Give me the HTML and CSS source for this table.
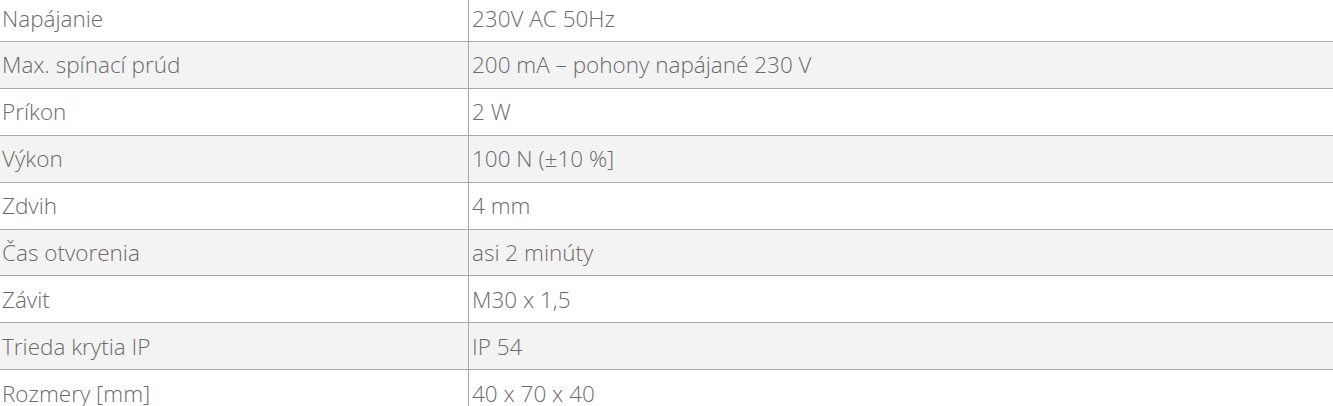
FILE: index.html
```html
<!DOCTYPE html>
<html lang="sk">
<head>
<meta charset="utf-8">
<title>Parametre</title>
<link rel="stylesheet" href="styles.css">
</head>
<body>
<div class="wrap">
<table class="specs">
<tbody>
<tr><td>Napájanie</td><td>230V AC 50Hz</td></tr>
<tr><td>Max. spínací prúd</td><td>200 mA – pohony napájané 230 V</td></tr>
<tr><td>Príkon</td><td>2 W</td></tr>
<tr><td>Výkon</td><td>100 N (±10 %]</td></tr>
<tr><td>Zdvih</td><td>4 mm</td></tr>
<tr><td>Čas otvorenia</td><td>asi 2 minúty</td></tr>
<tr><td>Závit</td><td>M30 x 1,5</td></tr>
<tr><td>Trieda krytia IP</td><td>IP 54</td></tr>
<tr><td>Rozmery [mm]</td><td>40 x 70 x 40</td></tr>
</tbody>
</table>
</div>
</body>
</html>
```
FILE: styles.css
```css
html, body {
  margin: 0;
  padding: 0;
  background: #ffffff;
  overflow: hidden;
}
.wrap {
  margin-top: -4.8px;
}
.specs {
  width: 100%;
  border-collapse: collapse;
  font-family: "Open Sans", "Liberation Sans", sans-serif;
  font-weight: 300;
  font-size: 22.5px;
  color: #6b6b6b;
}
.specs td {
  height: 45.86px;
  padding: 0 4px 0 2px;
  vertical-align: middle;
  border-top: 1px solid #aaaaaa;
  line-height: 1.2;
}
.specs tr:first-child td {
  border-top: none;
}
.specs td:first-child {
  width: 462px;
  border-right: 1px solid #aaaaaa;
}
.specs td + td {
  padding-left: 3px;
}
.specs tr:nth-child(even) td {
  background: #f3f3f3;
}
```
